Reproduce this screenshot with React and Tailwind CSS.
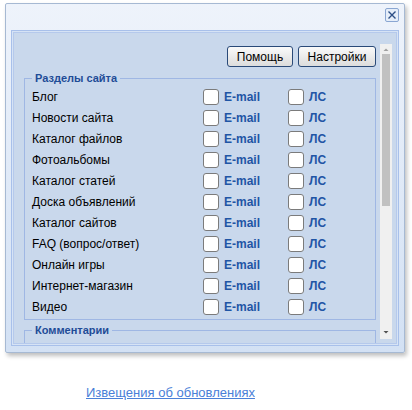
import React from 'react';

const sections = [
    'Блог',
    'Новости сайта',
    'Каталог файлов',
    'Фотоальбомы',
    'Каталог статей',
    'Доска объявлений',
    'Каталог сайтов',
    'FAQ (вопрос/ответ)',
    'Онлайн игры',
    'Интернет-магазин',
    'Видео',
];

function Box() {
    return <span className="w-[16px] h-[16px] bg-white border border-[#7b7b7b] rounded-[3px] shrink-0" />;
}

export default function App() {
    return (
        <div className="w-[412px] h-[410px] bg-white font-['Liberation_Sans',sans-serif] text-[12px] text-black overflow-hidden">
            <div className="pt-[3px] pl-[5px]">
                {/* window */}
                <div className="w-[400px] h-[350px] border border-[#a6b9d3] rounded-[2px] bg-gradient-to-b from-[#eef3fb] to-[#d3e1f4] shadow-[2px_3px_4px_rgba(0,0,0,0.25)] flex flex-col">
                    <div className="h-[26px] flex justify-end items-start pt-[4px] pr-[5px] shrink-0">
                        <button className="w-[14px] h-[14px] border border-[#8aa6d2] rounded-[2px] bg-[#e6eef9] flex items-center justify-center">
                            <svg width="10" height="10" viewBox="0 0 10 10">
                                <path d="M1.5 1.5 L8.5 8.5 M8.5 1.5 L1.5 8.5" stroke="#2d4f86" strokeWidth="1.4" />
                            </svg>
                        </button>
                    </div>
                    <div className="mx-[5px] h-[316px] border border-[#a8c0ea] bg-[#d6e3f5] p-[1px]">
                        <div className="h-full border border-[#b5c9ec] bg-[#c9d8ec] flex">
                            {/* content */}
                            <div className="flex-1 pl-[10px] pr-[4px] pt-[13px] overflow-hidden">
                                <div className="flex justify-end gap-[5px]">
                                    <button className="h-[21px] w-[66px] border border-[#2a4a78] rounded-[3px] bg-gradient-to-b from-[#fafafa] to-[#dcdcdc] text-[12px] leading-none">Помощь</button>
                                    <button className="h-[21px] w-[78px] border border-[#2a4a78] rounded-[3px] bg-gradient-to-b from-[#fafafa] to-[#dcdcdc] text-[12px] leading-none">Настройки</button>
                                </div>
                                <fieldset className="mt-[4px] border border-[#9fb7e4] pl-[7px] pb-[2px] pt-[1px]">
                                    <legend className="px-[3px] text-[11px] font-bold text-[#1f4c97] leading-[14px]">Разделы сайта</legend>
                                    {sections.map((s) => (
                                        <div key={s} className="h-[21px] flex items-center">
                                            <span className="w-[171px]">{s}</span>
                                            <div className="w-[85px] flex items-center gap-[5px]">
                                                <Box />
                                                <span className="font-bold text-[#1f55a5]">E-mail</span>
                                            </div>
                                            <div className="flex items-center gap-[5px]">
                                                <Box />
                                                <span className="font-bold text-[#1f55a5]">ЛС</span>
                                            </div>
                                        </div>
                                    ))}
                                </fieldset>
                                <fieldset className="mt-[3px] border border-[#9fb7e4] pl-[7px] h-[30px]">
                                    <legend className="px-[3px] text-[11px] font-bold text-[#1f4c97] leading-[14px]">Комментарии</legend>
                                </fieldset>
                            </div>
                            {/* scrollbar */}
                            <div className="w-[12px] mt-[11px] mb-[4px] mr-[4px] bg-[#f0f0f0] flex flex-col items-center">
                                <svg width="6" height="6" viewBox="0 0 6 6" className="mt-[3px]">
                                    <path d="M0.5 4 L3 1.5 L5.5 4 Z" fill="#a0a0a0" />
                                </svg>
                                <div className="w-[8px] h-[152px] bg-[#c1c1c1] mt-[1px]" />
                                <div className="flex-1" />
                                <svg width="6" height="6" viewBox="0 0 6 6" className="mb-[4px]">
                                    <path d="M0.5 2 L3 4.5 L5.5 2 Z" fill="#505050" />
                                </svg>
                            </div>
                        </div>
                    </div>
                </div>
            </div>
            <div className="mt-[30px] pl-[86px]">
                <a href="#" className="text-[#4a80d8] underline text-[13px]">Извещения об обновлениях</a>
            </div>
        </div>
    );
}
